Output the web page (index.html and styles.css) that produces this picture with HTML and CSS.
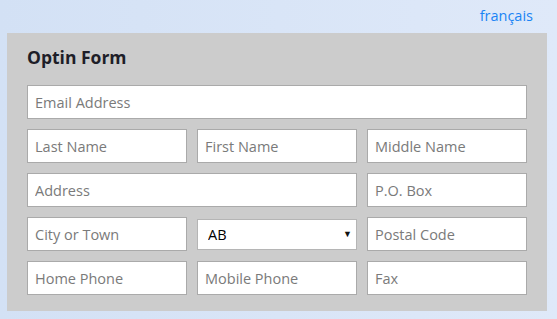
FILE: index.html
```html
<!DOCTYPE html>
<html lang="en">
<head>
  <meta charset="UTF-8" />
  <title>Optin Form</title>
  <link rel="stylesheet" href="styles.css">
</head>
<body>
  <div class="lang"><a href="#">français</a></div>
  <div class="panel">
    <h2>Optin Form</h2>
    <form class="grid" autocomplete="off">
      <input class="span3" type="email" placeholder="Email Address">
      <input type="text" placeholder="Last Name">
      <input type="text" placeholder="First Name">
      <input type="text" placeholder="Middle Name">
      <input class="span2" type="text" placeholder="Address">
      <input type="text" placeholder="P.O. Box">
      <input type="text" placeholder="City or Town">
      <div class="select-wrap">
        <select>
          <option>AB</option><option>BC</option><option>MB</option>
          <option>NB</option><option>NL</option><option>NS</option>
          <option>ON</option><option>PE</option><option>QC</option>
          <option>SK</option>
        </select>
      </div>
      <input type="text" placeholder="Postal Code">
      <input type="text" placeholder="Home Phone">
      <input type="text" placeholder="Mobile Phone">
      <input type="text" placeholder="Fax">
    </form>
  </div>
</body>
</html>
```

FILE: styles.css
```css
body { margin: 0; height: 319px; font-family: 'Open Sans', sans-serif; background: linear-gradient(to right, #d3e1f5, #dfe9f9); }
.lang { text-align: right; padding: 6px 24px 0 0; height: 33px; box-sizing: border-box; font-size: 14.5px; line-height: 20px; }
.lang a { color: #1a84f5; text-decoration: none; }
.panel { margin-left: 7px; width: 540px; box-sizing: border-box; background: #cccccc; padding: 12px 20px 16px; }
h2 { margin: 0 0 16px; font-size: 17.5px; font-weight: 700; color: #1e1e28; line-height: 24px; }
.grid { display: grid; grid-template-columns: repeat(3, 1fr); gap: 10px; }
.span3 { grid-column: span 3; }
.span2 { grid-column: span 2; }
input { height: 34px; box-sizing: border-box; border: 1px solid #aaaaaa; background: #fff; padding: 0 7px; font-family: 'Open Sans', sans-serif; font-size: 14.5px; color: #333; outline: none; min-width: 0; }
input::placeholder { color: #7a7a7a; }
.select-wrap { position: relative; align-self: center; }
select { width: 100%; height: 31px; box-sizing: border-box; border: 1px solid #b5b5b5; background: #fff; padding: 0 10px; font-family: 'Open Sans', sans-serif; font-size: 14.5px; color: #000; appearance: none; -webkit-appearance: none; border-radius: 0; outline: none; }
.select-wrap::after { content: "\25BC"; position: absolute; right: 5px; top: 8px; font-size: 9px; color: #111; pointer-events: none; }
```
